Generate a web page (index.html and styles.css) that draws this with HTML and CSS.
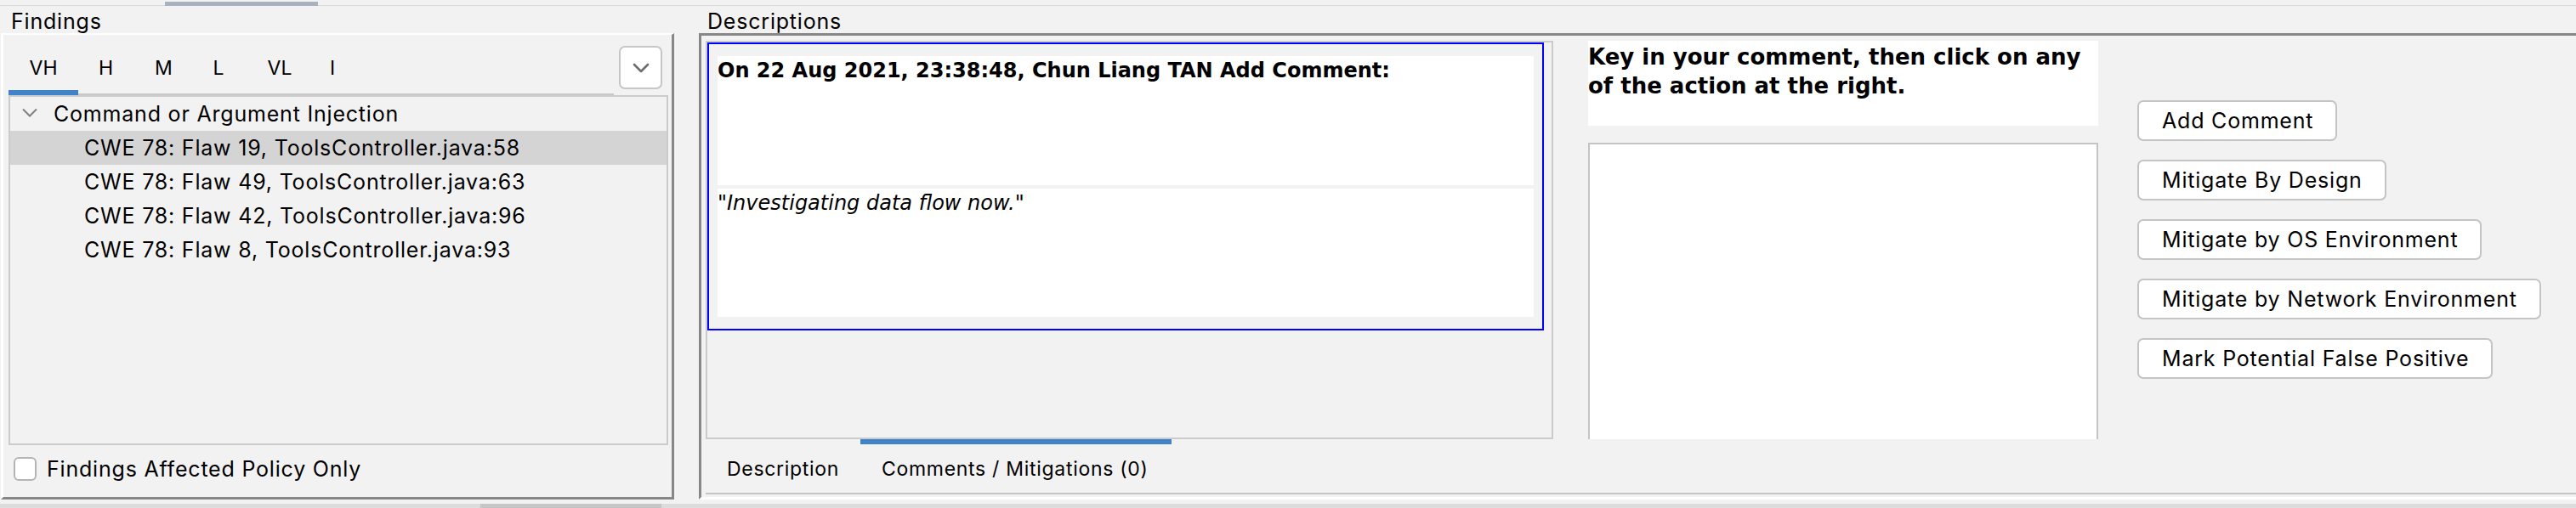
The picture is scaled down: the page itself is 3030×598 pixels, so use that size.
FILE: index.html
```html
<!DOCTYPE html>
<html>
<head>
<meta charset="utf-8">
<title>Findings</title>
<link rel="stylesheet" href="styles.css">
</head>
<body>
<div class="app">
  <div class="split-top"><div class="top-thumb"></div></div>
  <div class="main">
    <section class="findings">
      <div class="group-label">Findings</div>
      <div class="findings-panel">
        <div class="sev-row">
          <div class="sev-tabs">
            <div class="sev-tab active w-vh">VH</div>
            <div class="sev-tab w-h">H</div>
            <div class="sev-tab w-m">M</div>
            <div class="sev-tab w-l">L</div>
            <div class="sev-tab w-vl">VL</div>
            <div class="sev-tab w-i">I</div>
            <div class="sev-fill"></div>
          </div>
          <button class="dd-btn" type="button">
            <svg width="20" height="12" viewBox="0 0 20 12"><polyline points="2,2 10,10 18,2" fill="none" stroke="#6e6e6e" stroke-width="2.6" stroke-linecap="round" stroke-linejoin="round"/></svg>
          </button>
        </div>
        <div class="tree">
          <div class="tree-row group">
            <svg class="tree-chev" width="18" height="11" viewBox="0 0 18 11"><polyline points="1,1.5 9,9.5 17,1.5" fill="none" stroke="#808080" stroke-width="2"/></svg>
            <span>Command or Argument Injection</span>
          </div>
          <div class="tree-row leaf selected">CWE 78: Flaw 19, ToolsController.java:58</div>
          <div class="tree-row leaf">CWE 78: Flaw 49, ToolsController.java:63</div>
          <div class="tree-row leaf">CWE 78: Flaw 42, ToolsController.java:96</div>
          <div class="tree-row leaf">CWE 78: Flaw 8, ToolsController.java:93</div>
        </div>
        <div class="check-row">
          <span class="checkbox"></span>
          <span>Findings Affected Policy Only</span>
        </div>
      </div>
    </section>
    <section class="descriptions">
      <div class="group-label desc-label">Descriptions</div>
      <div class="desc-panel">
        <div class="tab-content">
          <div class="history-pane">
            <div class="history-box">
              <div class="hist-block hist-head">On 22 Aug 2021, 23:38:48, Chun Liang TAN Add Comment:</div>
              <div class="hist-block hist-body">"Investigating data flow now."</div>
            </div>
          </div>
          <div class="comment-col">
            <div class="instructions">Key in your comment, then click on any of the action at the right.</div>
            <div class="comment-input"></div>
          </div>
          <div class="actions">
            <button class="act-btn" type="button">Add Comment</button>
            <button class="act-btn" type="button">Mitigate By Design</button>
            <button class="act-btn" type="button">Mitigate by OS Environment</button>
            <button class="act-btn" type="button">Mitigate by Network Environment</button>
            <button class="act-btn" type="button">Mark Potential False Positive</button>
          </div>
        </div>
        <div class="bottom-tabs">
          <div class="btab btab-desc">Description</div>
          <div class="btab btab-comments active">Comments / Mitigations (0)</div>
        </div>
      </div>
    </section>
  </div>
  <div class="split-bottom"><div class="bottom-thumb"></div></div>
</div>
</body>
</html>
```
FILE: styles.css
```css
* { box-sizing: border-box; }
html, body { margin: 0; padding: 0; }
body {
  background: #f2f2f2;
  font-family: Inter, "Noto Sans", sans-serif;
  color: #000;
}
.app {
  width: 3030px;
  height: 598px;
  overflow: hidden;
  background: #f2f2f2;
}
.split-top {
  height: 8px;
  padding-top: 2px;
  background: linear-gradient(to bottom, transparent 6px, #d9d9d9 6px, #d9d9d9 7.5px, transparent 7.5px);
}
.top-thumb {
  margin-left: 194px;
  width: 180px;
  height: 5px;
  background: #aab1c0;
}
.main {
  display: flex;
  height: 585px;
}
.findings {
  width: 793px;
  flex: none;
}
.group-label {
  height: 31px;
  padding-left: 13px;
  font-size: 25px;
  letter-spacing: 0.8px;
  line-height: 28px;
  padding-top: 3px;
  white-space: nowrap;
}
.findings-panel {
  height: 549px;
  margin-left: 1px;
  border-top: 2px solid #ffffff;
  border-left: 3px solid #ffffff;
  border-right: 3px solid #878787;
  border-bottom: 3px solid #878787;
  display: flex;
  flex-direction: column;
}
.sev-row {
  display: flex;
  height: 71px;
  padding-left: 6px;
}
.sev-tabs {
  display: flex;
  width: 712px;
  height: 71px;
}
.sev-tab {
  height: 71px;
  padding-top: 25px;
  text-align: center;
  font-size: 23px;
  line-height: 28px;
  border-bottom: 2px solid #c8c8c8;
}
.w-vh { width: 82px; }
.w-h { width: 65px; }
.w-m { width: 71px; }
.w-l { width: 58px; }
.w-vl { width: 86px; }
.w-i { width: 38px; }
.sev-tab.active {
  border-bottom: 6px solid #4083c9;
}
.sev-fill {
  flex: 1;
  border-bottom: 2px solid #c8c8c8;
}
.dd-btn {
  margin: 13px 0 0 6px;
  width: 51px;
  height: 51px;
  padding: 0;
  background: #fff;
  border: 2px solid #c6c6c6;
  border-radius: 7px;
  display: flex;
  align-items: center;
  justify-content: center;
}
.tree {
  margin-left: 6px;
  width: 776px;
  height: 412px;
  border: 2px solid #cbcbcb;
  font-size: 25px;
  letter-spacing: 0.8px;
}
.tree-row {
  height: 40px;
  display: flex;
  align-items: center;
  white-space: nowrap;
}
.tree-row.group { padding-left: 14px; }
.tree-chev { margin-right: 19px; margin-top: -4px; }
.tree-row.leaf { padding-left: 87px; }
.tree-row.selected { background: #d4d4d4; }
.check-row {
  flex: 1;
  display: flex;
  align-items: center;
  padding-left: 12px;
  padding-bottom: 6px;
  font-size: 25px;
  letter-spacing: 0.8px;
  white-space: nowrap;
}
.checkbox {
  width: 27px;
  height: 28px;
  margin-right: 12px;
  background: #fff;
  border: 2px solid #b4b4b4;
  border-radius: 6px;
}
.descriptions {
  flex: 1;
  margin-left: 29px;
  min-width: 0;
}
.desc-label { padding-left: 10px; }
.desc-panel {
  height: 549px;
  border-top: 3px solid #878787;
  border-left: 3px solid #878787;
  border-bottom: 3px solid #ffffff;
}
.tab-content {
  display: flex;
  height: 475px;
  padding: 6px 0 0 5px;
}
.history-pane {
  flex: none;
  width: 997px;
  height: 469px;
  border: 2px solid #cbcbcb;
}
.history-box {
  width: 984px;
  height: 339px;
  border: 2px solid #0000ff;
  padding: 14px 10px 14px 10px;
  display: flex;
  flex-direction: column;
  gap: 4px;
}
.hist-block {
  background: #fff;
  height: 152px;
  font-family: "DejaVu Sans", Verdana, sans-serif;
  font-size: 24px;
  line-height: 28px;
  padding-top: 3px;
  white-space: nowrap;
}
.hist-head { font-weight: bold; }
.hist-body { font-style: italic; height: 151px; }
.comment-col {
  flex: none;
  width: 600px;
  margin-left: 41px;
  display: flex;
  flex-direction: column;
}
.instructions {
  height: 100px;
  background: #fff;
  font-family: "DejaVu Sans", Verdana, sans-serif;
  font-weight: bold;
  font-size: 26px;
  line-height: 34px;
  padding-top: 2px;
}
.comment-input {
  margin-top: 20px;
  height: 349px;
  background: #fff;
  border: 2px solid #c4c4c4;
  border-bottom: none;
}
.actions {
  margin-left: 46px;
  padding-top: 70px;
  display: flex;
  flex-direction: column;
  align-items: flex-start;
  gap: 22px;
}
.act-btn {
  height: 48px;
  padding: 0 26px 0 27px;
  background: #fff;
  border: 2px solid #c4c4c4;
  border-radius: 7px;
  font-family: Inter, "Noto Sans", sans-serif;
  font-size: 25px;
  letter-spacing: 0.8px;
  color: #000;
  white-space: nowrap;
}
.bottom-tabs {
  display: flex;
  margin-left: 5px;
  height: 65px;
  border-bottom: 2px solid #c4c4c4;
}
.btab {
  padding: 9px 0 0 25px;
  font-size: 23px;
  letter-spacing: 0.7px;
  line-height: 40px;
  border-top: 6px solid transparent;
  white-space: nowrap;
}
.btab-desc { width: 182px; }
.btab-comments { width: 366px; }
.btab.active { border-top-color: #4083c9; }
.split-bottom {
  height: 5px;
  background: #dcdcdc;
}
.bottom-thumb {
  margin-left: 565px;
  width: 213px;
  height: 5px;
  background: #c6c6c6;
}
```
